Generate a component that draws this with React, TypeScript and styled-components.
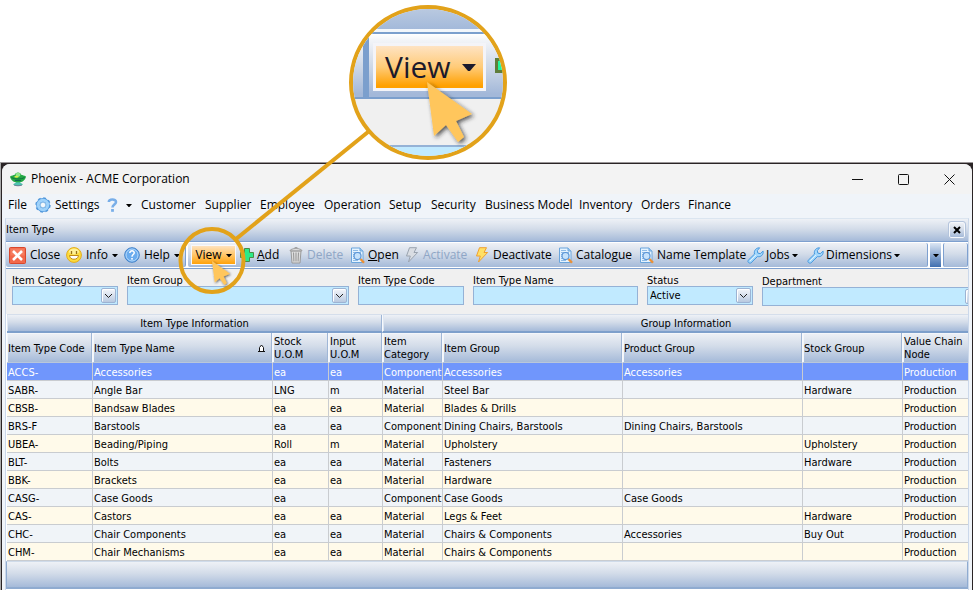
import React from "react";
import styled, { createGlobalStyle, css } from "styled-components";

const UI = `"Open Sans", "Noto Sans", sans-serif`;
const GRID = `"DejaVu Sans Condensed", "DejaVu Sans", "Noto Sans", sans-serif`;
const GOLD = "#e2a21a";
const STEEL = "linear-gradient(#eef1f6 0%, #d3dce9 45%, #a5bad9 100%)";

const Global = createGlobalStyle`
  * { box-sizing: border-box; }
  body { margin: 0; background: #fff; color: #000; font: 12px/16px ${UI}; }
  button, input, select { font: inherit; color: inherit; margin: 0; }
`;

const Page = styled.div`
  position: relative;
  min-height: 100vh;
  display: flex;
  flex-direction: column;
  padding-top: 162px;
  overflow: hidden;
`;
const Backdrop = styled.div`
  flex: 1;
  display: flex;
  background: #2a2425;
  border-top: 1px solid #9a9698;
  border-left: 1px solid #a9a9a9;
  margin-right: 1px;
`;
const Window = styled.main`
  flex: 1;
  min-width: 0;
  display: flex;
  flex-direction: column;
  margin: 1px 1px 0 1px;
  padding: 0 3px;
  background: #f0f4f9;
  border-radius: 8px 8px 0 0;
  overflow: hidden;
`;
const TitleBar = styled.header`
  display: flex;
  align-items: center;
  height: 30px;
  margin: 0 -3px;
  padding-left: 8px;
  background: #f3f3f3;
`;
const Title = styled.h1`
  flex: 1;
  margin: 0 0 0 5px;
  font-size: 12px;
  font-weight: 400;
`;
const Caption = styled.button`
  width: 46px;
  height: 28px;
  padding: 0;
  border: 0;
  background: none;
  display: grid;
  place-items: center;
`;
const MenuBar = styled.nav`
  display: flex;
  align-items: center;
  height: 24px;
  padding: 0 0 2px 3px;
`;
const MenuItem = styled.button<{ $w: number }>`
  width: ${(p) => p.$w}px;
  flex: none;
  display: flex;
  align-items: center;
  gap: 4px;
  padding: 0;
  border: 0;
  background: none;
  white-space: nowrap;
`;
const Client = styled.div`
  flex: 1;
  display: flex;
  flex-direction: column;
  border: 1px solid #cbd8ea;
  border-top-color: #dbe5f0;
  border-bottom: 0;
  background: #fff;
  min-width: 0;
`;
const Banner = styled.div`
  display: flex;
  align-items: center;
  justify-content: space-between;
  height: 22px;
  padding: 0 3px 0 0;
  background: ${STEEL};
  font: 11px/14px ${GRID};
`;
const BannerTitle = styled.h2`
  margin: 0;
  font-size: 11px;
  font-weight: 400;
`;
const CloseTab = styled.button`
  width: 16px;
  height: 16px;
  padding: 0;
  display: grid;
  place-items: center;
  border: 1px solid #f5f8fc;
  border-radius: 2px;
  outline: 1px solid #b4c4dc;
  background: ${STEEL};
`;
const ToolBars = styled.div`
  display: flex;
  gap: 2px;
  height: 28px;
  border: solid #7ea0cf;
  border-width: 1px 0;
  padding: 1px 0;
  background: #fff;
`;
const ToolGroup = styled.div<{ $w?: number }>`
  ${(p) => (p.$w ? css`flex: none; width: ${p.$w}px;` : css`flex: 1; min-width: 0;`)}
  display: flex;
  align-items: center;
  padding-left: 3px;
  background: ${STEEL};
  border-right: 1px solid #7ea0cf;
  border-radius: 2px;
  overflow: hidden;
`;
const Tool = styled.button<{ $w: number; $gap?: number }>`
  flex: none;
  width: ${(p) => p.$w}px;
  height: 20px;
  display: flex;
  align-items: center;
  gap: ${(p) => p.$gap ?? 2}px;
  padding: 0;
  border: 0;
  background: none;
  white-space: nowrap;
  &:disabled { color: #8fa6c6; }
`;
const ViewTool = styled.button`
  flex: none;
  width: 45px;
  height: 20px;
  margin-right: 3px;
  display: flex;
  align-items: center;
  justify-content: center;
  gap: 4px;
  padding: 0;
  border: 1px solid #f8f8fa;
  background: linear-gradient(#fee2bd 0%, #ffc567 50%, #ffa20a 100%);
`;
const More = styled.button`
  width: 11px;
  padding: 0;
  border: 0;
  display: grid;
  place-items: center;
  background: linear-gradient(#dbe6f4, #3f6fb0);
`;
const EmptyGroup = styled.div`
  width: 25px;
  border: 1px solid #7ea0cf;
  border-width: 0 1px;
  border-radius: 2px;
  background: ${STEEL};
`;
const Filters = styled.form`
  display: flex;
  gap: 9px;
  height: 45px;
  padding: 6px 0 0 6px;
  background: #f0f0f0;
  overflow: hidden;
  font: 11px/11px ${GRID};
`;
const Field = styled.label<{ $w: number; $low?: boolean }>`
  flex: none;
  width: ${(p) => p.$w}px;
  padding-top: ${(p) => (p.$low ? 1 : 0)}px;
  display: flex;
  flex-direction: column;
`;
const boxed = css`
  width: 100%;
  height: 19px;
  padding: 0 2px;
  border: 1px solid #95b2d6;
  border-radius: 0;
  outline: 0;
  background: #c1eaff;
  appearance: none;
`;
const TextBox = styled.input`${boxed}`;
const Select = styled.select`${boxed}`;
const Combo = styled.span`
  position: relative;
  display: flex;
`;
const Drop = styled.span`
  position: absolute;
  right: 2px;
  top: 2px;
  width: 15px;
  height: 15px;
  display: grid;
  place-items: center;
  border: 1px solid #9db3d3;
  border-radius: 2px;
  background: linear-gradient(#f4f6fa, #b9c9e0);
  box-shadow: inset 1px 1px #fff;
  pointer-events: none;
`;
const GridView = styled.div`
  margin-left: 1px;
  overflow: hidden;
`;
const Grid = styled.table`
  width: calc(100% + 22px);
  table-layout: fixed;
  border-collapse: separate;
  border-spacing: 0;
  font: 11px/13px ${GRID};
  background: #fff;
`;
const Band = styled.th`
  height: 19px;
  padding: 1px 0 0;
  font-weight: 400;
  background: ${STEEL};
  border-top: 1px solid #d5deeb;
  border-right: 1px solid #f7f9fc;
  border-bottom: 2px solid #7d9fcb;
  box-shadow: inset 1px 0 #dfe7f2, inset -1px 0 #9fb6d6;
`;
const Head = styled.th`
  height: 30px;
  padding: 1px 0 0 1px;
  font-weight: 400;
  text-align: left;
  background: ${STEEL};
  border-right: 1px solid #f7f9fc;
  border-bottom: 1px solid #b9c7da;
  box-shadow: inset -1px 0 #9fb6d6, inset 1px 1px #f3f6fa;
`;
const HeadRow = styled.span`
  display: flex;
  justify-content: space-between;
  align-items: center;
  padding-right: 7px;
`;
const Row = styled.tr<{ $active?: boolean }>`
  background: ${(p) => (p.$active ? "#7096fc" : "#fffaea")};
  color: ${(p) => (p.$active ? "#fff" : "#000")};
  &:nth-child(even) { background: #f0f4f8; }
`;
const Cell = styled.td`
  height: 18px;
  padding: 2px 0 0 1px;
  overflow: hidden;
  white-space: nowrap;
  border-right: 1px solid #c9ccd0;
  border-bottom: 1px solid #c9ccd0;
`;
const Footer = styled.footer`
  flex: 1;
  min-height: 26px;
  margin-bottom: 1px;
  border: 1px solid #8fabd0;
  border-top-color: #cfdbea;
  border-bottom-width: 2px;
  background: ${STEEL};
`;

/* Magnified callout */
const Overlay = styled.svg`
  position: absolute;
  left: 0;
  top: 0;
  pointer-events: none;
`;
const Lens = styled.div`
  position: absolute;
  left: 349px;
  top: 5px;
  width: 158px;
  height: 155px;
  border: 4px solid ${GOLD};
  border-radius: 50%;
  overflow: hidden;
  background: #f0f0f0;
`;
const LensBanner = styled.div`
  height: 23px;
  background: linear-gradient(#b9c9e0, #a3b9da);
  border-bottom: 3px solid #f2f6fb;
`;
const LensBar = styled.div`
  display: flex;
  height: 67px;
  border-top: 2px solid #7b9fcd;
  border-bottom: 2px solid #7b9fcd;
  background: linear-gradient(#fff 0, #f2f4f8 10%, #cbd6e6 55%, #a3b8d9 95%);
`;
const LensEdge = styled.div`
  flex: none;
  width: 16px;
  border: 0 solid #7b9fcd;
  border-right-width: 6px;
`;
const LensView = styled.button`
  flex: none;
  width: 113px;
  height: 48px;
  margin: 9px 0 0 4px;
  display: flex;
  align-items: center;
  gap: 11px;
  padding: 0 0 0 9px;
  border: 3px solid #f4f4f8;
  background: linear-gradient(#fee3c3 0%, #ffcb78 50%, #ffa000 95%);
  color: #1b1a2c;
  font-size: 30px;
  line-height: 40px;
`;
const LensAdd = styled.span`
  flex: none;
  width: 20px;
  height: 15px;
  margin: 24px 0 0 9px;
  border: 3px solid #5f7d3a;
  background: #22f59a;
`;
const LensField = styled.div`
  height: 20px;
  margin-top: 46px;
  border-top: 2px solid #95b2d6;
  background: #c1eaff;
`;

const Caret = ({ size = 6 }: { size?: number }) => (
  <svg width={size} height={size / 2} viewBox="0 0 6 3"><path d="M0 0h6L3.4 3h-.8z" fill="currentColor" /></svg>
);
const Chevron = () => (
  <svg width="9" height="6" viewBox="0 0 9 6"><path d="M1 1l3.5 3.5L8 1" fill="none" stroke="#222" /></svg>
);
const Logo = () => (
  <svg width="16" height="16" viewBox="0 0 16 16">
    <path d="M5 8h6l-1 3.500 3 1.800c-2 2.300-8 2.300-10 0L6 11.500z" fill="#4fc3b0" />
    <path d="M0 5.500C2 4.500 3.500 4 4.500 4c1-3.500 6-3.500 7 0 1 0 2.500.5 4.500 1.500-.5 3.500-3.500 5.500-5.500 5.800h-5C3.500 11 .5 9 0 5.500z" fill="#23a843" />
    <ellipse cx="8" cy="3.800" rx="2.500" ry="2" fill="#8fe88a" />
    <path d="M1.500 6.500c3.500 2 9.500 2 13 0" stroke="#107040" fill="none" />
    <ellipse cx="6.500" cy="5.800" rx="2.200" ry="1" fill="#d6ee4c" />
    <path d="M5 9.500h6" stroke="#0d6a55" />
    <path d="M4 14c2.500 1 5.500 1 8 0" stroke="#6b7f95" fill="none" />
  </svg>
);
const Gear = () => (
  <svg width="16" height="16" viewBox="0 0 16 16">
    <circle cx="8" cy="8" r="6.700" fill="none" stroke="#5799d8" strokeWidth="2" strokeDasharray="2.800 2.460" />
    <circle cx="8" cy="8" r="4.800" fill="none" stroke="#529adf" strokeWidth="4.200" />
    <circle cx="8" cy="8" r="4.700" fill="none" stroke="#9fd2fa" strokeWidth="3" />
    <circle cx="8" cy="8" r="2.800" fill="#f3f8fc" stroke="#6ca9e0" strokeWidth=".7" />
  </svg>
);
const Question = () => (
  <svg width="11" height="14" viewBox="0 0 11 14">
    <path d="M1.800 4C2 .8 9 .6 9 4c0 2.500-3.500 2.600-3.500 5.500" fill="none" stroke="#78aee8" strokeWidth="2.600" />
    <rect x="4.100" y="11" width="2.800" height="2.800" fill="#78aee8" />
  </svg>
);
const CloseIcon = () => (
  <svg width="17" height="17" viewBox="0 0 17 17">
    <rect x=".5" y=".5" width="16" height="16" rx="1" fill="#f2684a" stroke="#d9472c" />
    <rect x="1.500" y="1.500" width="14" height="7" fill="#f98a6c" opacity=".6" />
    <path d="M4 4l9 9M13 4l-9 9" stroke="#fff" strokeWidth="2.600" />
  </svg>
);
const Smile = () => (
  <svg width="16" height="16" viewBox="0 0 16 16">
    <circle cx="8" cy="8" r="7.400" fill="#fddc3c" stroke="#e3ab1c" />
    <ellipse cx="8" cy="4.500" rx="5" ry="3" fill="#fff6b0" opacity=".8" />
    <path d="M5.500 4v3M10.500 4v3" stroke="#9a7214" strokeWidth="1.300" />
    <path d="M3.500 8.500h9c-.3 5-8.700 5-9 0z" fill="#fff" stroke="#c08a18" />
  </svg>
);
const HelpIcon = () => (
  <svg width="16" height="16" viewBox="0 0 16 16">
    <circle cx="8" cy="8" r="7.300" fill="#6aacee" stroke="#4080c8" />
    <circle cx="8" cy="8" r="6" fill="none" stroke="#b4d8fa" />
    <path d="M5.800 6c0-3 4.600-2.700 4.400 0C10.100 7.600 8 7.600 8 9.700" fill="none" stroke="#fff" strokeWidth="1.500" />
    <rect x="7.200" y="11" width="1.600" height="1.600" fill="#fff" />
  </svg>
);
const Plus = () => (
  <svg width="16" height="16" viewBox="0 0 16 16">
    <path d="M5.500 1.500h5v4h4v5h-4v4h-5v-4h-4v-5h4z" fill="#2bea88" stroke="#4d8a45" />
  </svg>
);
const Bin = () => (
  <svg width="14" height="17" viewBox="0 0 14 17">
    <path d="M2 4h10l-1 12H3z" fill="#dedede" stroke="#999" />
    <path d="M4.500 5.500l.4 9M7 5.500v9M9.500 5.500l-.4 9" stroke="#999" strokeWidth="1.100" />
    <path d="M1 3.800C1 1 13 1 13 3.800z" fill="#f2f2f2" stroke="#999" />
    <path d="M5 1.500C5 .3 9 .3 9 1.500" stroke="#999" fill="none" />
  </svg>
);
const Lookup = () => (
  <svg width="16" height="17" viewBox="0 0 16 17">
    <path d="M1.500 1h8.500l3 3v11.500H1.500z" fill="#e5f3ff" stroke="#6ba5dc" />
    <path d="M10 1v3h3" fill="#9ccaf2" stroke="#6ba5dc" />
    <path d="M3 3.500h5M3 5.500h8M3 7.500h2M3 9.500h2M3 11.500h2M3 13.500h5" stroke="#8fbbe6" />
    <circle cx="7.500" cy="9" r="3.500" fill="#c6e2fb" stroke="#5b95d6" strokeWidth="1.200" />
    <path d="M10.500 12l3.500 3.800" stroke="#ec9136" strokeWidth="2.400" />
  </svg>
);
const Bolt = ({ off }: { off?: boolean }) => (
  <svg width="14" height="16" viewBox="0 0 14 16">
    <path
      d="M4.500.7h7L9 5.500h3.600L3.500 15l1.800-6H1.500z"
      fill={off ? "#d9dde3" : "#ffe066"}
      stroke={off ? "#9aa3af" : "#f0a030"}
      strokeLinejoin="round"
    />
  </svg>
);
const Wrench = () => (
  <svg width="17" height="17" viewBox="0 0 17 17">
    <path
      d="M1.200 13.300l6.300-6.200c-.9-3.700 1.800-6.400 5.100-6.300L10.300 3.600l.5 2.500 2.500.6 2.800-2.600c.6 3.900-2.400 6.200-5.700 5.500l-6.300 6.200c-1.400 1.200-4.200-.9-2.900-2.500z"
      fill="#a5d8fb"
      stroke="#4597de"
    />
    <path d="M3 14l6-6" stroke="#e0f4ff" />
  </svg>
);

const MENUS: [string, number][] = [
  ["Customer", 64], ["Supplier", 55], ["Employee", 64], ["Operation", 65], ["Setup", 42], ["Security", 54],
  ["Business Model", 94], ["Inventory", 62], ["Orders", 47], ["Finance", 50],
];
const COLUMNS: [string, number?][] = [
  ["Item Type Code", 86], ["Item Type Name", 180], ["Stock\nU.O.M", 56], ["Input\nU.O.M", 54], ["Item\nCategory", 60],
  ["Item Group", 180], ["Product Group", 180], ["Stock Group", 100], ["Value Chain\nNode"],
];
const ROWS = [
  ["ACCS-", "Accessories", "ea", "ea", "Component", "Accessories", "Accessories", "", "Production"],
  ["SABR-", "Angle Bar", "LNG", "m", "Material", "Steel Bar", "", "Hardware", "Production"],
  ["CBSB-", "Bandsaw Blades", "ea", "ea", "Material", "Blades & Drills", "", "", "Production"],
  ["BRS-F", "Barstools", "ea", "ea", "Component", "Dining Chairs, Barstools", "Dining Chairs, Barstools", "", "Production"],
  ["UBEA-", "Beading/Piping", "Roll", "m", "Material", "Upholstery", "", "Upholstery", "Production"],
  ["BLT-", "Bolts", "ea", "ea", "Material", "Fasteners", "", "Hardware", "Production"],
  ["BBK-", "Brackets", "ea", "ea", "Material", "Hardware", "", "", "Production"],
  ["CASG-", "Case Goods", "ea", "", "Component", "Case Goods", "Case Goods", "", "Production"],
  ["CAS-", "Castors", "ea", "ea", "Material", "Legs & Feet", "", "Hardware", "Production"],
  ["CHC-", "Chair Components", "ea", "ea", "Material", "Chairs & Components", "Accessories", "Buy Out", "Production"],
  ["CHM-", "Chair Mechanisms", "ea", "ea", "Material", "Chairs & Components", "", "", "Production"],
];

const ComboField = ({ label, w, value = "", low }: { label: string; w: number; value?: string; low?: boolean }) => (
  <Field $w={w} $low={low}>
    {label}
    <Combo>
      <Select defaultValue={value}><option>{value}</option></Select>
      <Drop><Chevron /></Drop>
    </Combo>
  </Field>
);

export default function App() {
  return (
    <Page>
      <Global />
      <Backdrop>
        <Window>
          <TitleBar>
            <Logo />
            <Title>Phoenix - ACME Corporation</Title>
            <Caption aria-label="Minimize"><svg width="11" height="11"><path d="M0 5.500h11" stroke="#111" /></svg></Caption>
            <Caption aria-label="Maximize"><svg width="11" height="11"><rect x=".5" y=".5" width="10" height="10" rx="1" fill="none" stroke="#111" /></svg></Caption>
            <Caption aria-label="Close window"><svg width="11" height="11"><path d="M.5.500l10 10M10.500.500l-10 10" stroke="#111" /></svg></Caption>
          </TitleBar>
          <MenuBar>
            <MenuItem $w={27}>File</MenuItem>
            <MenuItem $w={72}><Gear />Settings</MenuItem>
            <MenuItem $w={34} aria-label="Help topics"><Question /><span /><Caret /></MenuItem>
            {MENUS.map(([name, w]) => <MenuItem key={name} $w={w}>{name}</MenuItem>)}
          </MenuBar>
          <Client>
            <Banner>
              <BannerTitle>Item Type</BannerTitle>
              <CloseTab aria-label="Close tab"><svg width="8" height="8"><path d="M1 1l6 6M7 1L1 7" stroke="#000" strokeWidth="2" /></svg></CloseTab>
            </Banner>
            <ToolBars>
              <ToolGroup $w={180}>
                <Tool $w={57} $gap={4}><CloseIcon />Close</Tool>
                <Tool $w={58} $gap={4}><Smile />Info<Caret /></Tool>
                <Tool $w={58} $gap={4}><HelpIcon />Help<Caret /></Tool>
              </ToolGroup>
              <ToolGroup>
                <ViewTool>View<Caret /></ViewTool>
                <Tool $w={50}><Plus /><span><u>A</u>dd</span></Tool>
                <Tool $w={61} $gap={4} disabled><Bin />Delete</Tool>
                <Tool $w={55}><Lookup /><span><u>O</u>pen</span></Tool>
                <Tool $w={70} $gap={4} disabled><Bolt off />Activate</Tool>
                <Tool $w={83} $gap={4}><Bolt />Deactivate</Tool>
                <Tool $w={81}><Lookup />Catalogue</Tool>
                <Tool $w={108}><Lookup />Name Template</Tool>
                <Tool $w={60}><Wrench />Jobs<Caret /></Tool>
                <Tool $w={96}><Wrench />Dimensions<Caret /></Tool>
              </ToolGroup>
              <More aria-label="More tools"><Caret /></More>
              <EmptyGroup />
            </ToolBars>
            <Filters>
              <ComboField label="Item Category" w={106} />
              <ComboField label="Item Group" w={222} />
              <Field $w={106}>Item Type Code<TextBox /></Field>
              <Field $w={165}>Item Type Name<TextBox /></Field>
              <ComboField label="Status" w={106} value="Active" />
              <ComboField label="Department" w={220} low />
            </Filters>
            <GridView>
              <Grid>
                <colgroup>{COLUMNS.map(([name, w]) => <col key={name} width={w} />)}</colgroup>
                <thead>
                  <tr><Band colSpan={4}>Item Type Information</Band><Band colSpan={5}>Group Information</Band></tr>
                  <tr>
                    {COLUMNS.map(([name], i) => (
                      <Head key={name}>
                        {i === 1 ? (
                          <HeadRow>{name}<svg width="7" height="9"><path d="M1.500 7.500V3.500L3.500 1l2 2.500v4zM0 7.500h7" fill="#fff" stroke="#111" /></svg></HeadRow>
                        ) : name.split("\n").map((line) => <div key={line}>{line}</div>)}
                      </Head>
                    ))}
                  </tr>
                </thead>
                <tbody>
                  {ROWS.map((row, i) => (
                    <Row key={row[0]} $active={i === 0}>{row.map((text, c) => <Cell key={c}>{text}</Cell>)}</Row>
                  ))}
                </tbody>
              </Grid>
            </GridView>
            <Footer />
          </Client>
        </Window>
      </Backdrop>
      <Lens>
        <LensBanner />
        <LensBar>
          <LensEdge />
          <LensView>View<Caret size={14} /></LensView>
          <LensAdd />
        </LensBar>
        <LensField />
      </Lens>
      <Overlay width="974" height="300" viewBox="0 0 974 300">
        <defs>
          <filter id="shade" x="-30%" y="-30%" width="170%" height="170%">
            <feDropShadow dx="2" dy="2" stdDeviation="2" floodColor="#222" floodOpacity=".75" />
          </filter>
          <path id="pointer" d="M0 0L45 32 29 39 37 55 31 60 19 43 7 54z" />
        </defs>
        <g fill="none" stroke={GOLD} strokeWidth="4">
          <circle cx="212" cy="260.500" r="31.500" />
          <path d="M236 239L368 132" />
        </g>
        <use href="#pointer" transform="translate(427 82)" fill="#ffc65c" filter="url(#shade)" />
        <use href="#pointer" transform="translate(212 261) scale(.4)" fill="#ffc65c" filter="url(#shade)" />
      </Overlay>
    </Page>
  );
}
